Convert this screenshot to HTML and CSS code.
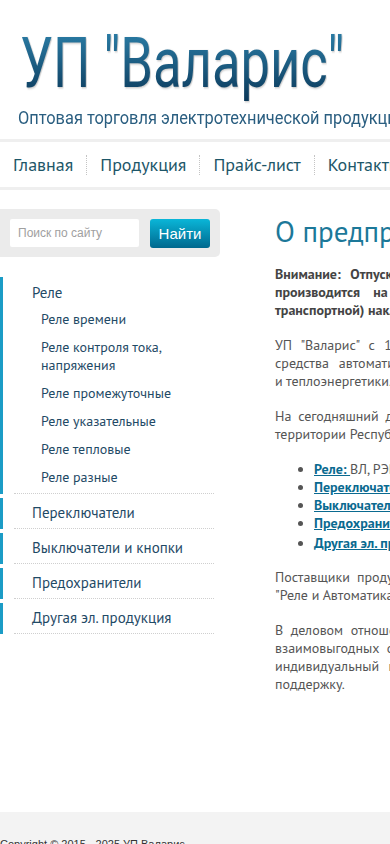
FILE: index.html
```html
<!DOCTYPE html>
<html lang="ru">
<head>
<meta charset="utf-8">
<title>УП "Валарис"</title>
<link rel="stylesheet" href="styles.css">
</head>
<body>
<div class="page">
  <header class="header">
    <div class="logo">УП "Валарис"</div>
    <div class="slogan">Оптовая торговля электротехнической продукцией</div>
  </header>
  <nav class="nav">
    <a class="nav-item" href="#">Главная</a>
    <span class="nav-sep"></span>
    <a class="nav-item" href="#">Продукция</a>
    <span class="nav-sep"></span>
    <a class="nav-item" href="#">Прайс-лист</a>
    <span class="nav-sep"></span>
    <a class="nav-item" href="#">Контакты</a>
  </nav>
  <div class="main">
    <aside class="sidebar">
      <form class="search">
        <input class="search-input" type="text" placeholder="Поиск по сайту">
        <button class="search-btn" type="button">Найти</button>
      </form>
      <ul class="menu">
        <li class="menu-item">
          <a class="menu-link" href="#">Реле</a>
          <ul class="submenu">
            <li><a href="#">Реле времени</a></li>
            <li><a href="#">Реле контроля тока, напряжения</a></li>
            <li><a href="#">Реле промежуточные</a></li>
            <li><a href="#">Реле указательные</a></li>
            <li><a href="#">Реле тепловые</a></li>
            <li><a href="#">Реле разные</a></li>
          </ul>
        </li>
        <li class="menu-item"><a class="menu-link" href="#">Переключатели</a></li>
        <li class="menu-item"><a class="menu-link" href="#">Выключатели и кнопки</a></li>
        <li class="menu-item"><a class="menu-link" href="#">Предохранители</a></li>
        <li class="menu-item"><a class="menu-link" href="#">Другая эл. продукция</a></li>
      </ul>
    </aside>
    <main class="content">
      <h1 class="title">О предприятии</h1>
      <p class="notice">Внимание: Отпуск продукции со склада в г. Минске, а также её доставка покупателям производится на основании доверенности и правильно оформленной ТТН (товарно-транспортной) накладной.</p>
      <p>УП "Валарис" с 1998 года осуществляет оптовые поставки электрооборудования, а также средства автоматизации для предприятий энергетики, машиностроения, нефтехимии, ЖКХ и&nbsp;теплоэнергетики.</p>
      <p>На сегодняшний день наше предприятие — один из крупнейших поставщиков продукции на территории Республики Беларусь.</p>
      <ul class="list">
        <li><a href="#">Реле: </a>ВЛ, РЭВ, РП, РЭП, РТ, РН, РУ, РТЛ, РТТ и другие</li>
        <li><a href="#">Переключатели</a></li>
        <li><a href="#">Выключатели и кнопки</a></li>
        <li><a href="#">Предохранители</a></li>
        <li><a href="#">Другая эл. продукция</a></li>
      </ul>
      <p>Поставщики продукции — ведущие заводы России, Украины и Беларуси, в том числе и ОАО "Реле&nbsp;и&nbsp;Автоматика".</p>
      <p>В деловом отношении мы стремимся к построению долгосрочных, стабильных, надёжных и взаимовыгодных отношений с нашими партнерами, предлагая всем гибкую систему скидок, индивидуальный подход к каждому клиенту, быструю доставку со склада и техническую поддержку.</p>
    </main>
  </div>
  <footer class="footer">
    <div class="copy">Copyright © 2015 - 2025 УП Валарис</div>
  </footer>
</div>
</body>
</html>
```
FILE: styles.css
```css
html, body {
  margin: 0;
  padding: 0;
  background: #fff;
}
.page {
  width: 960px;
  font-family: "PT Sans", "Open Sans", sans-serif;
}
.header {
  padding: 22px 0 0 0;
  height: 117px;
  box-sizing: content-box;
}
.logo {
  font-family: Roboto, sans-serif;
  font-size: 70px;
  line-height: 82px;
  margin-left: 20px;
  background: linear-gradient(#2f86b0, #0a3556);
  -webkit-background-clip: text;
  background-clip: text;
  color: transparent;
  display: inline-block;
  transform: scaleX(0.75);
  transform-origin: left center;
  white-space: nowrap;
  filter: drop-shadow(1px 1px 1px rgba(0, 0, 0, 0.25));
}
.slogan {
  font-family: Roboto, sans-serif;
  font-size: 18px;
  color: #2a5e80;
  margin: 3px 0 0 18px;
  white-space: nowrap;
  transform: scaleX(0.91);
  transform-origin: left center;
}
.nav {
  border-top: 3px solid #efefef;
  border-bottom: 3px solid #efefef;
  height: 45px;
  display: flex;
  align-items: center;
}
.nav-item {
  font-size: 18px;
  color: #1d5668;
  text-decoration: none;
  padding: 0 13px;
}
.nav-sep {
  width: 0;
  height: 20px;
  border-left: 1px dotted #c4c4c4;
}
.main {
  display: flex;
  padding-top: 19px;
  min-height: 622px;
  box-sizing: border-box;
}
.sidebar {
  width: 220px;
  flex: none;
}
.search {
  background: #ebebeb;
  border-radius: 0 5px 5px 0;
  height: 48px;
  display: flex;
  align-items: center;
  padding: 0 10px;
  gap: 11px;
  margin: 0;
}
.search-input {
  width: 129px;
  height: 28px;
  border: none;
  border-radius: 2px;
  box-sizing: border-box;
  padding: 0 8px;
  font-family: "Liberation Sans", Arial, sans-serif;
  font-size: 12px;
  color: #333;
  background: #fff;
}
.search-input::placeholder {
  color: #a0a0a0;
}
.search-btn {
  width: 60px;
  height: 29px;
  border: none;
  border-radius: 3px;
  background: linear-gradient(#0ab6d8, #00688e);
  color: #fff;
  font-family: "Liberation Sans", Arial, sans-serif;
  font-size: 15px;
  padding: 0;
}
.menu {
  list-style: none;
  margin: 20px 0 0 0;
  padding: 0;
  width: 214px;
}
.menu-item {
  border-left: 3px solid #1b9cc6;
  margin-top: 4px;
}
.menu-item:first-child {
  margin-top: 0;
}
.menu-link, .submenu {
  display: block;
  margin-left: 11px;
  border-bottom: 1px dotted #cfcfcf;
}
.menu-link {
  font-size: 15px;
  color: #1f4a66;
  text-decoration: none;
  padding: 6px 0 6px 18px;
  line-height: 18px;
}
.menu-item:first-child .menu-link {
  border-bottom: none;
  padding: 7px 0 3px 18px;
}
.submenu {
  list-style: none;
  padding: 0 0 2px 27px;
}
.submenu li {
  padding: 5px 0;
}
.submenu a {
  font-size: 14px;
  line-height: 18px;
  color: #1f4a66;
  text-decoration: none;
  display: block;
  width: 150px;
}
.content {
  margin-left: 55px;
  width: 600px;
  font-size: 14px;
  line-height: 18px;
  color: #555;
}
.title {
  font-weight: normal;
  font-size: 29px;
  line-height: 36px;
  color: #1c7899;
  margin: 4px 0 16px 0;
}
.content p {
  margin: 0 0 17px 0;
  text-align: justify;
}
.content .notice {
  font-weight: bold;
  color: #444;
}
.list {
  margin: 0 0 16px 0;
  padding-left: 39px;
}
.list li:last-child {
  margin-top: 2px;
}
.list a {
  color: #0a6a90;
  font-weight: bold;
  text-decoration: underline;
}
.footer {
  background: #f3f3f3;
  height: 60px;
  padding-top: 26px;
  box-sizing: border-box;
}
.copy {
  font-family: "Liberation Sans", Arial, sans-serif;
  font-size: 11px;
  color: #333;
}
```
